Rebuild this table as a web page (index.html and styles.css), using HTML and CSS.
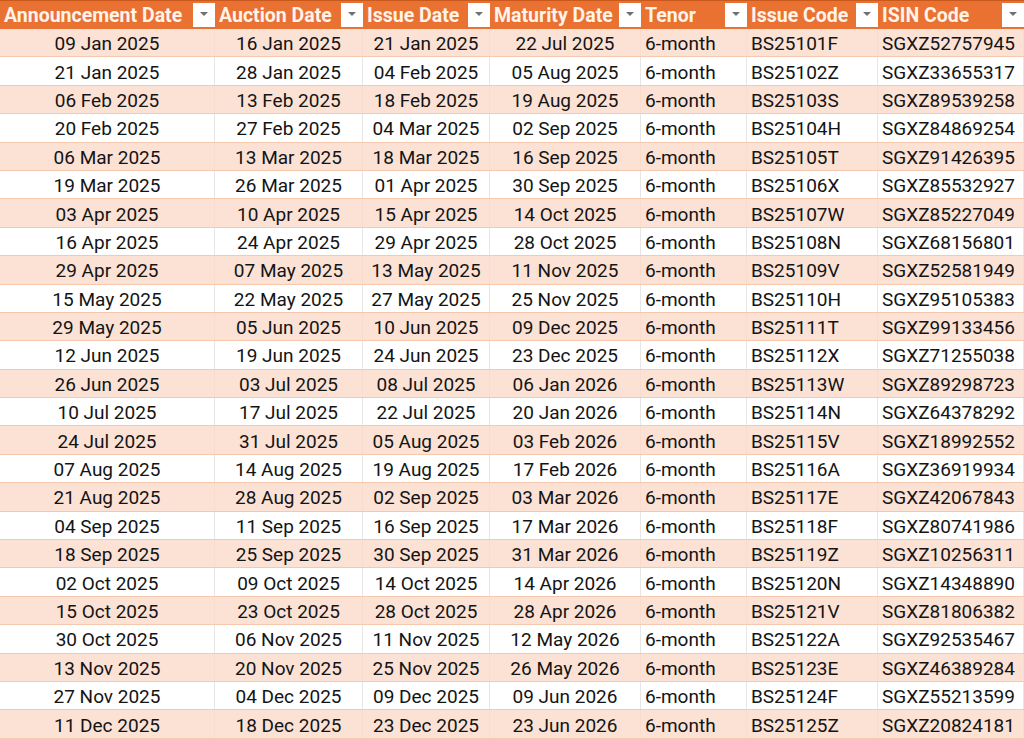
FILE: index.html
```html
<!DOCTYPE html>
<html>
<head>
<meta charset="utf-8">
<link rel="stylesheet" href="styles.css">
</head>
<body>
<div class="sheet">
  <div class="row head">
    <div class="hc">Announcement Date<span class="flt"></span></div>
    <div class="hc">Auction Date<span class="flt"></span></div>
    <div class="hc">Issue Date<span class="flt"></span></div>
    <div class="hc">Maturity Date<span class="flt"></span></div>
    <div class="hc">Tenor<span class="flt"></span></div>
    <div class="hc">Issue Code<span class="flt"></span></div>
    <div class="hc">ISIN Code<span class="flt"></span></div>
  </div>
  <div class="row odd"><div class="c ctr">09 Jan 2025</div><div class="c ctr">16 Jan 2025</div><div class="c ctr">21 Jan 2025</div><div class="c ctr">22 Jul 2025</div><div class="c">6-month</div><div class="c">BS25101F</div><div class="c">SGXZ52757945</div></div>
  <div class="row even"><div class="c ctr">21 Jan 2025</div><div class="c ctr">28 Jan 2025</div><div class="c ctr">04 Feb 2025</div><div class="c ctr">05 Aug 2025</div><div class="c">6-month</div><div class="c">BS25102Z</div><div class="c">SGXZ33655317</div></div>
  <div class="row odd"><div class="c ctr">06 Feb 2025</div><div class="c ctr">13 Feb 2025</div><div class="c ctr">18 Feb 2025</div><div class="c ctr">19 Aug 2025</div><div class="c">6-month</div><div class="c">BS25103S</div><div class="c">SGXZ89539258</div></div>
  <div class="row even"><div class="c ctr">20 Feb 2025</div><div class="c ctr">27 Feb 2025</div><div class="c ctr">04 Mar 2025</div><div class="c ctr">02 Sep 2025</div><div class="c">6-month</div><div class="c">BS25104H</div><div class="c">SGXZ84869254</div></div>
  <div class="row odd"><div class="c ctr">06 Mar 2025</div><div class="c ctr">13 Mar 2025</div><div class="c ctr">18 Mar 2025</div><div class="c ctr">16 Sep 2025</div><div class="c">6-month</div><div class="c">BS25105T</div><div class="c">SGXZ91426395</div></div>
  <div class="row even"><div class="c ctr">19 Mar 2025</div><div class="c ctr">26 Mar 2025</div><div class="c ctr">01 Apr 2025</div><div class="c ctr">30 Sep 2025</div><div class="c">6-month</div><div class="c">BS25106X</div><div class="c">SGXZ85532927</div></div>
  <div class="row odd"><div class="c ctr">03 Apr 2025</div><div class="c ctr">10 Apr 2025</div><div class="c ctr">15 Apr 2025</div><div class="c ctr">14 Oct 2025</div><div class="c">6-month</div><div class="c">BS25107W</div><div class="c">SGXZ85227049</div></div>
  <div class="row even"><div class="c ctr">16 Apr 2025</div><div class="c ctr">24 Apr 2025</div><div class="c ctr">29 Apr 2025</div><div class="c ctr">28 Oct 2025</div><div class="c">6-month</div><div class="c">BS25108N</div><div class="c">SGXZ68156801</div></div>
  <div class="row odd"><div class="c ctr">29 Apr 2025</div><div class="c ctr">07 May 2025</div><div class="c ctr">13 May 2025</div><div class="c ctr">11 Nov 2025</div><div class="c">6-month</div><div class="c">BS25109V</div><div class="c">SGXZ52581949</div></div>
  <div class="row even"><div class="c ctr">15 May 2025</div><div class="c ctr">22 May 2025</div><div class="c ctr">27 May 2025</div><div class="c ctr">25 Nov 2025</div><div class="c">6-month</div><div class="c">BS25110H</div><div class="c">SGXZ95105383</div></div>
  <div class="row odd"><div class="c ctr">29 May 2025</div><div class="c ctr">05 Jun 2025</div><div class="c ctr">10 Jun 2025</div><div class="c ctr">09 Dec 2025</div><div class="c">6-month</div><div class="c">BS25111T</div><div class="c">SGXZ99133456</div></div>
  <div class="row even"><div class="c ctr">12 Jun 2025</div><div class="c ctr">19 Jun 2025</div><div class="c ctr">24 Jun 2025</div><div class="c ctr">23 Dec 2025</div><div class="c">6-month</div><div class="c">BS25112X</div><div class="c">SGXZ71255038</div></div>
  <div class="row odd"><div class="c ctr">26 Jun 2025</div><div class="c ctr">03 Jul 2025</div><div class="c ctr">08 Jul 2025</div><div class="c ctr">06 Jan 2026</div><div class="c">6-month</div><div class="c">BS25113W</div><div class="c">SGXZ89298723</div></div>
  <div class="row even"><div class="c ctr">10 Jul 2025</div><div class="c ctr">17 Jul 2025</div><div class="c ctr">22 Jul 2025</div><div class="c ctr">20 Jan 2026</div><div class="c">6-month</div><div class="c">BS25114N</div><div class="c">SGXZ64378292</div></div>
  <div class="row odd"><div class="c ctr">24 Jul 2025</div><div class="c ctr">31 Jul 2025</div><div class="c ctr">05 Aug 2025</div><div class="c ctr">03 Feb 2026</div><div class="c">6-month</div><div class="c">BS25115V</div><div class="c">SGXZ18992552</div></div>
  <div class="row even"><div class="c ctr">07 Aug 2025</div><div class="c ctr">14 Aug 2025</div><div class="c ctr">19 Aug 2025</div><div class="c ctr">17 Feb 2026</div><div class="c">6-month</div><div class="c">BS25116A</div><div class="c">SGXZ36919934</div></div>
  <div class="row odd"><div class="c ctr">21 Aug 2025</div><div class="c ctr">28 Aug 2025</div><div class="c ctr">02 Sep 2025</div><div class="c ctr">03 Mar 2026</div><div class="c">6-month</div><div class="c">BS25117E</div><div class="c">SGXZ42067843</div></div>
  <div class="row even"><div class="c ctr">04 Sep 2025</div><div class="c ctr">11 Sep 2025</div><div class="c ctr">16 Sep 2025</div><div class="c ctr">17 Mar 2026</div><div class="c">6-month</div><div class="c">BS25118F</div><div class="c">SGXZ80741986</div></div>
  <div class="row odd"><div class="c ctr">18 Sep 2025</div><div class="c ctr">25 Sep 2025</div><div class="c ctr">30 Sep 2025</div><div class="c ctr">31 Mar 2026</div><div class="c">6-month</div><div class="c">BS25119Z</div><div class="c">SGXZ10256311</div></div>
  <div class="row even"><div class="c ctr">02 Oct 2025</div><div class="c ctr">09 Oct 2025</div><div class="c ctr">14 Oct 2025</div><div class="c ctr">14 Apr 2026</div><div class="c">6-month</div><div class="c">BS25120N</div><div class="c">SGXZ14348890</div></div>
  <div class="row odd"><div class="c ctr">15 Oct 2025</div><div class="c ctr">23 Oct 2025</div><div class="c ctr">28 Oct 2025</div><div class="c ctr">28 Apr 2026</div><div class="c">6-month</div><div class="c">BS25121V</div><div class="c">SGXZ81806382</div></div>
  <div class="row even"><div class="c ctr">30 Oct 2025</div><div class="c ctr">06 Nov 2025</div><div class="c ctr">11 Nov 2025</div><div class="c ctr">12 May 2026</div><div class="c">6-month</div><div class="c">BS25122A</div><div class="c">SGXZ92535467</div></div>
  <div class="row odd"><div class="c ctr">13 Nov 2025</div><div class="c ctr">20 Nov 2025</div><div class="c ctr">25 Nov 2025</div><div class="c ctr">26 May 2026</div><div class="c">6-month</div><div class="c">BS25123E</div><div class="c">SGXZ46389284</div></div>
  <div class="row even"><div class="c ctr">27 Nov 2025</div><div class="c ctr">04 Dec 2025</div><div class="c ctr">09 Dec 2025</div><div class="c ctr">09 Jun 2026</div><div class="c">6-month</div><div class="c">BS25124F</div><div class="c">SGXZ55213599</div></div>
  <div class="row odd"><div class="c ctr">11 Dec 2025</div><div class="c ctr">18 Dec 2025</div><div class="c ctr">23 Dec 2025</div><div class="c ctr">23 Jun 2026</div><div class="c">6-month</div><div class="c">BS25125Z</div><div class="c">SGXZ20824181</div></div>
</div>
</body>
</html>
```

FILE: styles.css
```css
html, body {
  margin: 0;
  padding: 0;
  background: #ffffff;
}
body {
  font-family: "Roboto", "Liberation Sans", sans-serif;
  color: #141414;
  overflow: hidden;
}
.sheet {
  width: 1024px;
  height: 739px;
  display: flex;
  flex-direction: column;
}
.row {
  display: grid;
  grid-template-columns: 215px 148px 127px 151px 106px 131px 146px;
  height: 28.4px;
  box-sizing: border-box;
}
.row.head {
  height: 29px;
  background: #e97132;
  border-top: 1px solid #c9581d;
}
.hc {
  display: flex;
  align-items: center;
  justify-content: space-between;
  padding-left: 4px;
  font-weight: bold;
  font-size: 19.5px;
  color: #fff3ea;
  white-space: nowrap;
  overflow: hidden;
}
.flt {
  align-self: flex-start;
  margin-top: 2px;
  width: 22px;
  height: 24px;
  background: #ffffff;
  position: relative;
  flex: none;
}
.flt::after {
  content: "";
  position: absolute;
  left: 7px;
  top: 9px;
  border-left: 4px solid transparent;
  border-right: 4px solid transparent;
  border-top: 4px solid #707070;
}
.row.odd {
  background: #fbe2d5;
  border-bottom: 1px solid #f6c8ad;
}
.row.even {
  background: #ffffff;
  border-bottom: 1px solid #f6c8ad;
}
.c {
  display: flex;
  align-items: center;
  padding-left: 4px;
  padding-top: 2px;
  font-size: 19px;
  white-space: nowrap;
  border-right: 1px solid #e6e6e6;
}
.row.odd .c {
  border-right-color: #f8dccd;
}
.c.ctr {
  justify-content: center;
  padding-left: 0;
}
```
